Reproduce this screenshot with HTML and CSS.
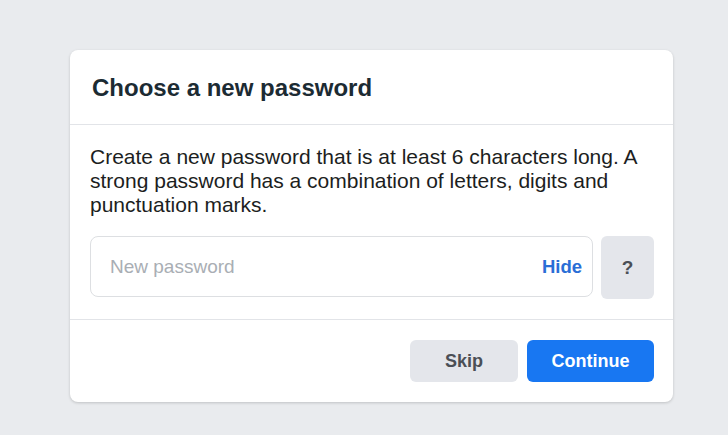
FILE: index.html
```html
<!DOCTYPE html>
<html lang="en">
<head>
<meta charset="utf-8">
<title>Choose a new password</title>
<link rel="stylesheet" href="styles.css">
</head>
<body>
<div class="card">
  <div class="card-header">
    <h2 class="title">Choose a new password</h2>
  </div>
  <div class="card-body">
    <p class="desc">Create a new password that is at least 6 characters long. A strong password has a combination of letters, digits and punctuation marks.</p>
    <div class="pw-row">
      <div class="pw-field">
        <input class="pw-input" type="text" placeholder="New password">
        <span class="pw-hide">Hide</span>
      </div>
      <button class="help-btn" type="button">?</button>
    </div>
  </div>
  <div class="card-footer">
    <button class="btn btn-secondary" type="button">Skip</button>
    <button class="btn btn-primary" type="button">Continue</button>
  </div>
</div>
</body>
</html>
```

FILE: styles.css
```css
html, body {
  margin: 0;
  padding: 0;
}
body {
  background: #e9ebee;
  font-family: "Liberation Sans", Arial, Helvetica, sans-serif;
  color: #1c1e21;
  padding: 50px 0 0 70px;
  height: 435px;
  box-sizing: border-box;
}
.card {
  width: 603px;
  background: #ffffff;
  border-radius: 8px;
  box-shadow: 0 1px 3px rgba(0, 0, 0, 0.18);
}
.card-header {
  height: 74px;
  border-bottom: 1px solid #e2e4e8;
  display: flex;
  align-items: center;
  padding: 0 22px;
}
.title {
  margin: 0;
  font-size: 24px;
  font-weight: bold;
  color: #1c2b33;
  line-height: 29px;
}
.card-body {
  padding: 20px 19px 20px 20px;
  border-bottom: 1px solid #e2e4e8;
}
.desc {
  margin: 0;
  font-size: 21px;
  line-height: 24px;
  color: #1c1e21;
}
.pw-row {
  margin-top: 19px;
  display: flex;
  align-items: flex-start;
  gap: 8px;
}
.pw-field {
  flex: 1;
  height: 61px;
  box-sizing: border-box;
  border: 1px solid #dddfe2;
  border-radius: 8px;
  display: flex;
  align-items: center;
  padding: 0 10px 0 19px;
}
.pw-input {
  flex: 1;
  border: none;
  outline: none;
  background: transparent;
  font-family: "Liberation Sans", Arial, sans-serif;
  font-size: 19px;
  color: #1c1e21;
  padding: 0;
  min-width: 0;
}
.pw-input::placeholder {
  color: #a9aeb4;
}
.pw-hide {
  font-size: 18.5px;
  font-weight: bold;
  color: #2a6ed6;
}
.help-btn {
  width: 53px;
  height: 63px;
  border: none;
  border-radius: 6px;
  background: #e4e6eb;
  color: #4b4f56;
  font-family: "Liberation Sans", Arial, sans-serif;
  font-size: 19px;
  font-weight: bold;
  padding: 0;
}
.card-footer {
  padding: 20px 19px 20px 20px;
  display: flex;
  justify-content: flex-end;
  gap: 9px;
}
.btn {
  height: 42px;
  border: none;
  border-radius: 6px;
  font-family: "Liberation Sans", Arial, sans-serif;
  font-size: 18px;
  font-weight: bold;
  padding: 0;
}
.btn-secondary {
  width: 108px;
  background: #e4e6eb;
  color: #4b4f56;
}
.btn-primary {
  width: 127px;
  background: #1877f2;
  color: #ffffff;
}
```
